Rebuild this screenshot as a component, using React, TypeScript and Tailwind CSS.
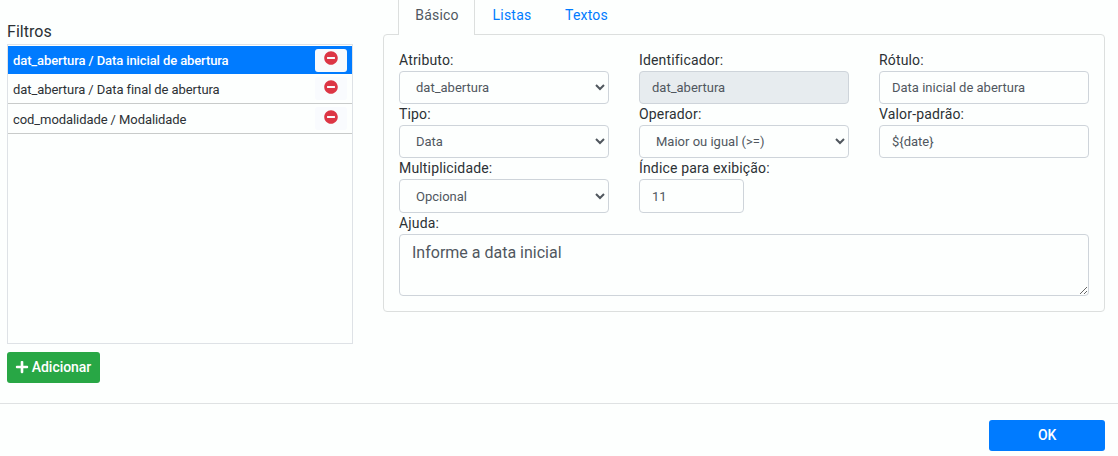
import type { ReactNode } from "react";
import { FaMinusCircle, FaPlus } from "react-icons/fa";

const filters = [
  { label: "dat_abertura / Data inicial de abertura", active: true },
  { label: "dat_abertura / Data final de abertura", active: false },
  { label: "cod_modalidade / Modalidade", active: false },
];

const control =
  "block h-full w-full rounded border border-[#ced4da] bg-[#fdfffe] text-[13px] text-[#50575e] outline-none";

function Field({ label, children, tall }: { label: string; children: ReactNode; tall?: boolean }) {
  return (
    <div>
      <label className="block h-[21px] text-sm leading-[21px] tracking-[0.16px] whitespace-nowrap">{label}</label>
      <div className={tall ? "h-[34px]" : "h-[33px]"}>{children}</div>
    </div>
  );
}

function Select({ value }: { value: string }) {
  return (
    <select className={`${control} pl-3`} defaultValue={value}>
      <option>{value}</option>
    </select>
  );
}

function TextInput({ value, disabled }: { value: string; disabled?: boolean }) {
  return (
    <input
      className={`${control} px-3 disabled:bg-[#e7ecef]`}
      defaultValue={value}
      disabled={disabled}
    />
  );
}

export default function App() {
  return (
    <div className="flex h-[456px] w-[1118px] flex-col overflow-hidden bg-[#fdfffe] font-['Roboto',sans-serif] text-[#2c3135]">
      <div className="flex h-[403px] shrink-0 pl-[7px]">
        <section className="w-[346px] pt-5">
          <h1 className="h-6 text-base leading-6 tracking-[0.05px]">Filtros</h1>
          <ul className="h-[300px] border border-[#dee2e6] pt-px">
            {filters.map((f) => (
              <li
                key={f.label}
                className={
                  f.active
                    ? "flex h-7 items-center justify-between bg-[#007bff] pr-[5px] pl-[5px] text-[13px] font-medium tracking-[-0.1px] text-white"
                    : "flex h-[30px] items-center justify-between border-b border-[#c8cbca] pr-[5px] pl-[5px] text-[13px] tracking-[-0.08px]"
                }
              >
                <span className="pt-0.5">{f.label}</span>
                <button
                  className={
                    f.active
                      ? "flex h-[23px] w-8 justify-center rounded-[3px] bg-[#f8fafd] pt-[3px] text-[#dc3545]"
                      : "flex h-[23px] w-8 justify-center rounded-[3px] bg-[#f9fbfe] pt-[3px] text-[#dc3545]"
                  }
                >
                  <FaMinusCircle size={14} className={f.active ? "-mt-px" : ""} />
                </button>
              </li>
            ))}
          </ul>
          <button className="mt-2 flex h-[31px] w-[93px] items-center justify-center gap-[3px] rounded-[3px] bg-[#28a745] pr-px pb-0.5 text-sm font-medium tracking-[-0.05px] text-white">
            <FaPlus size={14} />
            Adicionar
          </button>
        </section>

        <section className="ml-[30px] w-[722px]">
          <nav className="flex h-[35px] pl-[15px] text-sm leading-[31px] tracking-[0.2px]">
            <a className="relative z-10 h-[35px] w-[77px] border-x border-[#dcdfde] bg-[#fdfffe] pl-px text-center text-[#50575e]">
              Básico
            </a>
            <a className="w-[73px] pl-px text-center text-[#007bff]">Listas</a>
            <a className="w-[76px] pl-px text-center text-[#007bff]">Textos</a>
          </nav>
          <div className="-mt-px h-[278px] rounded border border-[#dcdfde] px-[15px] pt-[15px]">
            <div className="grid grid-cols-3 gap-x-[30px]">
              <Field label="Atributo:">
                <Select value="dat_abertura" />
              </Field>
              <Field label="Identificador:">
                <TextInput value="dat_abertura" disabled />
              </Field>
              <Field label="Rótulo:">
                <TextInput value="Data inicial de abertura" />
              </Field>
              <Field label="Tipo:">
                <Select value="Data" />
              </Field>
              <Field label="Operador:">
                <Select value="Maior ou igual (>=)" />
              </Field>
              <Field label="Valor-padrão:">
                <TextInput value="${date}" />
              </Field>
              <Field label="Multiplicidade:" tall>
                <Select value="Opcional" />
              </Field>
              <div className="w-[105px]">
                <Field label="Índice para exibição:" tall>
                  <TextInput value="11" />
                </Field>
              </div>
            </div>
            <label className="block h-[21px] text-sm leading-[21px] tracking-[0.16px]">Ajuda:</label>
            <textarea
              className="block h-[62px] w-full rounded border border-[#ced4da] px-3 py-1.5 text-base leading-6 text-[#50575e] outline-none"
              defaultValue="Informe a data inicial"
            />
          </div>
        </section>
      </div>
      <footer className="flex justify-end border-t border-[#dfe2e3] pt-4 pr-[13px]">
        <button className="h-[31px] w-[116px] rounded-[3px] bg-[#007bff] pb-0.5 text-sm font-medium tracking-[-0.3px] text-white">
          OK
        </button>
      </footer>
    </div>
  );
}
